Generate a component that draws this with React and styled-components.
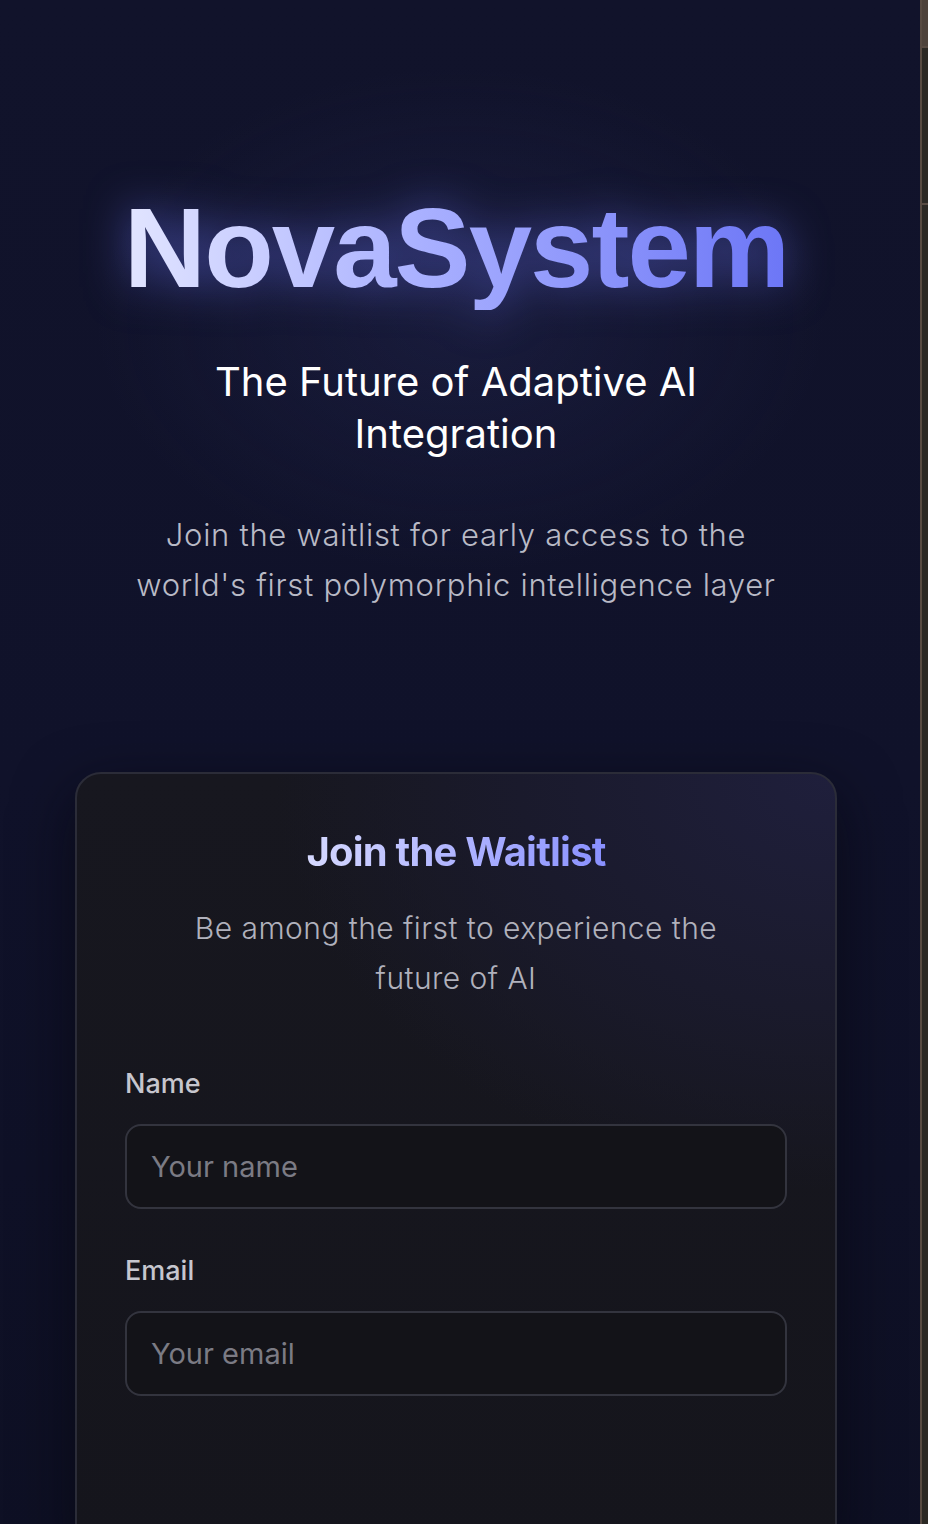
import React from "react";
import styled, { createGlobalStyle } from "styled-components";

const GlobalStyle = createGlobalStyle`
  html, body {
    margin: 0;
    padding: 0;
    background: #10122a;
  }
  * {
    box-sizing: border-box;
  }
  body {
    font-family: Inter, "Noto Sans", sans-serif;
    -webkit-font-smoothing: antialiased;
  }
`;

const Page = styled.div`
  display: flex;
  min-height: 1524px;
  overflow: hidden;
`;

const Main = styled.main`
  flex: 1;
  display: flex;
  flex-direction: column;
  align-items: center;
  padding-right: 8px;
  background:
    radial-gradient(ellipse 520px 360px at 50% 320px, rgba(40, 44, 92, 0.35), transparent 70%),
    linear-gradient(180deg, #11132b 0%, #10122a 50%, #0e1024 100%);
`;

const Hero = styled.section`
  display: flex;
  flex-direction: column;
  align-items: center;
  text-align: center;
  max-width: 680px;
  padding-top: 185px;
`;

const Brand = styled.h1`
  margin: 0;
  font-family: "Liberation Sans", Arial, sans-serif;
  font-weight: 700;
  font-size: 114px;
  line-height: 1.1;
  letter-spacing: -2px;
  background: linear-gradient(90deg, #e2e5ff 0%, #a9b0ff 45%, #6c76f6 100%);
  -webkit-background-clip: text;
  background-clip: text;
  color: transparent;
  filter: drop-shadow(0 0 22px rgba(110, 120, 255, 0.55));
`;

const Tagline = styled.h2`
  margin: 46px 0 0;
  font-weight: 400;
  font-size: 40px;
  line-height: 52px;
  color: #ffffff;
  max-width: 600px;
`;

const Lead = styled.p`
  margin: 50px 0 0;
  font-weight: 300;
  font-size: 31px;
  line-height: 50px;
  letter-spacing: 0.7px;
  color: #b9bac6;
`;

const Card = styled.section`
  margin-top: 162px;
  width: 762px;
  padding: 54px 48px 160px;
  border: 2px solid #2b2c38;
  border-radius: 26px;
  background:
    radial-gradient(ellipse 700px 520px at 100% 0%, #1f1f3c 0%, #1a1a2c 45%, rgba(22, 22, 30, 0) 80%),
    linear-gradient(180deg, #17171f 0%, #15151c 100%);
  box-shadow: 0 20px 60px rgba(5, 5, 12, 0.6);
  display: flex;
  flex-direction: column;
  align-items: center;
`;

const CardTitle = styled.h3`
  margin: 0;
  font-weight: 700;
  font-size: 40px;
  line-height: 48px;
  letter-spacing: -0.8px;
  background: linear-gradient(90deg, #d6d9ff 0%, #8990ff 100%);
  -webkit-background-clip: text;
  background-clip: text;
  color: transparent;
`;

const CardText = styled.p`
  margin: 27px 0 0;
  max-width: 560px;
  text-align: center;
  font-weight: 300;
  font-size: 30px;
  line-height: 50px;
  letter-spacing: 0.45px;
  color: #b0b1bc;
`;

const Form = styled.form`
  width: 100%;
  margin-top: 61px;
  display: flex;
  flex-direction: column;
  gap: 42px;
`;

const Field = styled.div`
  display: flex;
  flex-direction: column;
  gap: 20px;
`;

const Label = styled.label`
  font-weight: 500;
  font-size: 27px;
  line-height: 40px;
  color: #c6c6ce;
`;

const Input = styled.input`
  height: 85px;
  width: 100%;
  padding: 0 24px;
  border: 2px solid #33343e;
  border-radius: 16px;
  background: #131318;
  font-family: Inter, "Noto Sans", sans-serif;
  font-size: 29px;
  color: #e6e6ec;
  outline: none;

  &::placeholder {
    color: #7b7b84;
  }
`;

const Rail = styled.div`
  width: 8px;
  display: flex;
  flex-direction: column;
  border-left: 2px solid #584b42;
  background: #2c2924;
`;

const RailPart = styled.div`
  height: ${(p) => p.$h}px;
  background: ${(p) => p.$bg || "transparent"};
  border-bottom: 2px solid #584b42;
  flex: ${(p) => (p.$grow ? 1 : "none")};
`;

export default function App() {
  return (
    <>
      <GlobalStyle />
      <Page>
        <Main>
          <Hero>
            <Brand>NovaSystem</Brand>
            <Tagline>The Future of Adaptive AI Integration</Tagline>
            <Lead>
              Join the waitlist for early access to the
              <br />
              world's first polymorphic intelligence layer
            </Lead>
          </Hero>
          <Card>
            <CardTitle>Join the Waitlist</CardTitle>
            <CardText>Be among the first to experience the future of AI</CardText>
            <Form onSubmit={(e) => e.preventDefault()}>
              <Field>
                <Label htmlFor="name">Name</Label>
                <Input id="name" type="text" placeholder="Your name" />
              </Field>
              <Field>
                <Label htmlFor="email">Email</Label>
                <Input id="email" type="email" placeholder="Your email" />
              </Field>
            </Form>
          </Card>
        </Main>
        <Rail>
          <RailPart $h={48} $bg="#4e433b" />
          <RailPart $h={157} />
          <RailPart $h={1310} $grow />
        </Rail>
      </Page>
    </>
  );
}
